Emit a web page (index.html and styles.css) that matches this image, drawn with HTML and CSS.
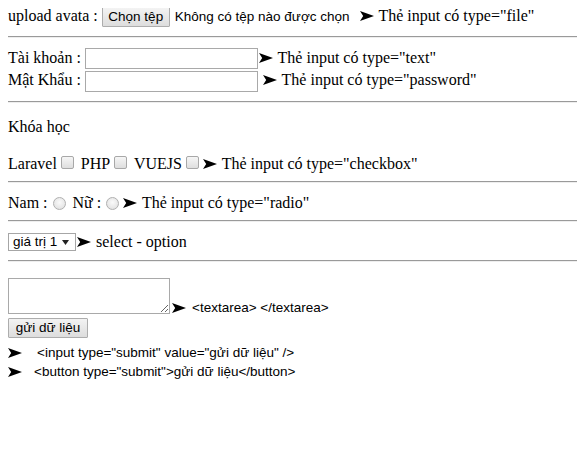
FILE: index.html
```html
<!DOCTYPE html>
<html lang="vi">
<head>
<meta charset="utf-8">
<title>Form</title>
<link rel="stylesheet" href="styles.css">
</head>
<body>
<form class="form">
  <div class="row row-file">upload avata : <span class="file"><button type="button" class="btn btn-file">Chọn tệp</button><span class="sans file-name">Không có tệp nào được chọn</span></span> <svg class="arr" viewBox="0 0 14 10" width="14" height="10"><path d="M0 0L14 5L0 10L3.2 5Z"/></svg> Thẻ input có type="file"</div>
  <hr class="sep">
  <div class="row row-input row-input-1">Tài khoản : <input class="text" type="text"><svg class="arr" viewBox="0 0 14 10" width="14" height="10"><path d="M0 0L14 5L0 10L3.2 5Z"/></svg> Thẻ input có type="text"</div>
  <div class="row row-input row-input-2">Mật Khẩu : <input class="text" type="password"> <svg class="arr" viewBox="0 0 14 10" width="14" height="10"><path d="M0 0L14 5L0 10L3.2 5Z"/></svg> Thẻ input có type="password"</div>
  <hr class="sep">
  <p class="title">Khóa học</p>
  <div class="row row-check">Laravel<input class="check" type="checkbox"> PHP<input class="check" type="checkbox"> VUEJS<input class="check" type="checkbox"><svg class="arr" viewBox="0 0 14 10" width="14" height="10"><path d="M0 0L14 5L0 10L3.2 5Z"/></svg> Thẻ input có type="checkbox"</div>
  <hr class="sep">
  <div class="row row-radio">Nam :<input class="radio" type="radio" name="gt"> Nữ :<input class="radio" type="radio" name="gt"><svg class="arr" viewBox="0 0 14 10" width="14" height="10"><path d="M0 0L14 5L0 10L3.2 5Z"/></svg> Thẻ input có type="radio"</div>
  <hr class="sep">
  <div class="row row-select"><span class="select"><span class="sans">giá trị 1</span><svg class="caret" viewBox="0 0 7 5" width="7" height="5"><path d="M0 0H7L3.5 5Z"/></svg></span><svg class="arr" viewBox="0 0 14 10" width="14" height="10"><path d="M0 0L14 5L0 10L3.2 5Z"/></svg> select - option</div>
  <hr class="sep">
  <div class="row-area">
    <textarea class="area"></textarea>
    <span class="area-note"><svg class="arr" viewBox="0 0 14 10" width="14" height="10"><path d="M0 0L14 5L0 10L3.2 5Z"/></svg> <span class="sans">&lt;textarea&gt; &lt;/textarea&gt;</span></span>
  </div>
  <div class="row-submit">
    <button type="submit" class="btn btn-submit">gửi dữ liệu</button>
  </div>
  <div class="row row-code row-code-1"><svg class="arr" viewBox="0 0 14 10" width="14" height="10"><path d="M0 0L14 5L0 10L3.2 5Z"/></svg><span class="sans code code-1">&lt;input type="submit" value="gửi dữ liệu" /&gt;</span></div>
  <div class="row row-code"><svg class="arr" viewBox="0 0 14 10" width="14" height="10"><path d="M0 0L14 5L0 10L3.2 5Z"/></svg><span class="sans code code-2">&lt;button type="submit"&gt;gửi dữ liệu&lt;/button&gt;</span></div>
</form>
</body>
</html>
```

FILE: styles.css
```css
html, body {
  background: #fff;
}
body {
  margin: 8px;
  font-family: "Liberation Serif", "Times New Roman", serif;
  font-size: 16px;
  color: #000;
}
.form {
  margin: 0;
}
.sans {
  font-family: "Liberation Sans", Arial, sans-serif;
  font-size: 13.5px;
}
.row {
  white-space: nowrap;
  line-height: 18px;
}
.arr {
  fill: #000;
  vertical-align: 0;
  margin: 0 1px;
}
.sep {
  margin: 8px 0;
  border: 0;
  border-top: 1px solid #9a9a9a;
  border-bottom: 1px solid #eee;
  height: 0;
}

/* buttons */
.btn {
  font-family: "Liberation Sans", Arial, sans-serif;
  font-size: 13.5px;
  color: #000;
  background: linear-gradient(#f3f3f3, #dddddd);
  border: 1px solid #adadad;
  border-radius: 1px;
  padding: 0;
  height: 20px;
  line-height: 18px;
  margin: 0;
  text-align: center;
}

/* file row */
.row-file {
  height: 20px;
  line-height: 16px;
}
.file {
  display: inline-block;
  width: 253px;
  vertical-align: top;
  height: 16px;
  line-height: 16px;
}
.btn-file {
  width: 68px;
  vertical-align: top;
  margin-top: -1px;
}
.file-name {
  margin-left: 5px;
  vertical-align: 0;
}

/* text inputs */
.row-input-1 {
  padding-top: 3px;
  height: 20px;
}
.row-input-2 {
  padding-top: 2px;
  height: 22px;
}
.text {
  box-sizing: border-box;
  width: 173px;
  height: 21px;
  border: 1px solid #a9a9a9;
  padding: 1px 2px;
  margin: 0;
  background: #fff;
  font-size: 13px;
  vertical-align: top;
}
.row-input-1 .text {
  margin-top: -1px;
}

.title {
  margin: 15px 0 16px;
  line-height: 18px;
}

/* checkbox / radio */
.row-check {
  padding-top: 3px;
  height: 18px;
}
.check,
.radio {
  appearance: none;
  -webkit-appearance: none;
  width: 13px;
  height: 13px;
  box-sizing: border-box;
  border: 1px solid #a8a8a8;
  background: linear-gradient(#f6f6f6, #dedede);
  vertical-align: 0;
}
.check {
  border-radius: 2px;
  margin: 0 3px 0 4px;
}
.radio {
  border-radius: 50%;
  border-color: #b0b0b0;
  background: radial-gradient(circle at 50% 40%, #fafafa, #dcdcdc);
  margin: 0 3px 0 5px;
  vertical-align: -2px;
}
.row-radio {
  padding-top: 3px;
  height: 18px;
}

/* select */
.row-select {
  padding-top: 3px;
  height: 19px;
}
.select {
  display: inline-flex;
  align-items: center;
  justify-content: space-between;
  box-sizing: border-box;
  width: 68px;
  height: 18px;
  border: 1px solid #a6a6a6;
  padding: 0 6px 0 4px;
  vertical-align: top;
  line-height: 16px;
  background: #fff;
}
.caret {
  fill: #222;
  margin-top: 1px;
}

/* textarea */
.row-area {
  margin-top: 16px;
  height: 40px;
  display: flex;
  align-items: flex-start;
}
.area {
  box-sizing: border-box;
  width: 162px;
  height: 36px;
  border: 1px solid #a9a9a9;
  margin: 0;
  padding: 2px;
  resize: both;
  flex: none;
}
.area-note {
  margin-top: 21px;
  line-height: 15px;
  white-space: nowrap;
}
.area-note .arr {
  margin: 0 1px 0 2px;
  vertical-align: -1px;
}
.area-note .sans {
  margin-left: 1px;
}
.row-submit {
  height: 22px;
}
.btn-submit {
  width: 80px;
}
.row-code {
  height: 19px;
  line-height: 19px;
}
.row-code-1 {
  margin-top: 2px;
}
.row-code .arr {
  margin: 0;
  vertical-align: -1px;
}
.code-1 {
  margin-left: 15px;
}
.code-2 {
  margin-left: 12px;
}
```
